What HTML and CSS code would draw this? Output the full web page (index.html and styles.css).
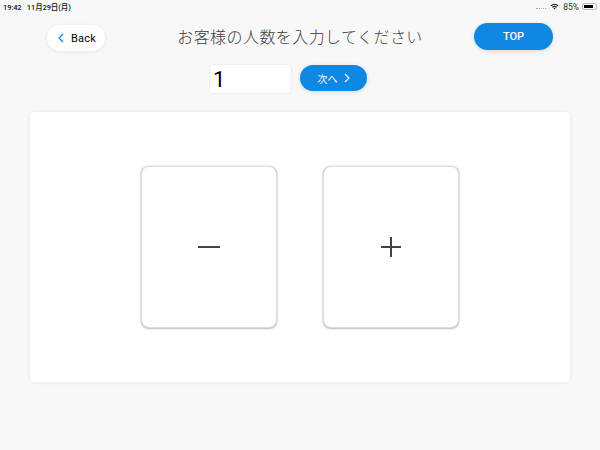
FILE: index.html
```html
<!DOCTYPE html>
<html lang="ja">
  <head>
    <meta charset="UTF-8" />
    <title>人数入力</title>
    <link rel="stylesheet" href="styles.css">
  </head>

  <body>
    <div class="status-bar">
      <span class="status-time">19:42&nbsp;&nbsp;&nbsp;11月29日(月)</span>
      <div class="status-right">
        <span class="status-dots"></span>
        <svg class="wifi" width="9" height="7" viewBox="0 0 12 9">
          <path d="M0.5 3 A8 8 0 0 1 11.5 3 L10.3 4.2 A6.3 6.3 0 0 0 1.7 4.2 Z" fill="#222" />
          <path d="M2.6 5 A5 5 0 0 1 9.4 5 L8.2 6.2 A3.3 3.3 0 0 0 3.8 6.2 Z" fill="#222" />
          <path d="M4.6 7 A2 2 0 0 1 7.4 7 L6 8.6 Z" fill="#222" />
        </svg>
        <span>85%</span>
        <div class="battery"><div class="battery-level"></div></div>
      </div>
    </div>

    <header class="header">
      <a class="back-btn">
        <svg width="6" height="10" viewBox="0 0 6 10">
          <path d="M5 1 L1 5 L5 9" fill="none" stroke="#0f88e3" stroke-width="1.2" />
        </svg>
        Back
      </a>
      <h1 class="title">お客様の人数を入力してください</h1>
      <a class="top-btn">TOP</a>
    </header>

    <div class="input-row">
      <input class="count-input" type="text" value="1" />
      <a class="next-btn">
        次へ
        <svg width="6" height="10" viewBox="0 0 6 10">
          <path d="M1 1 L5 5 L1 9" fill="none" stroke="#fff" stroke-width="1.1" />
        </svg>
      </a>
    </div>

    <main class="panel">
      <button class="count-btn">
        <svg width="24" height="24" viewBox="0 0 24 24">
          <path d="M1 12 H23" stroke="#444" stroke-width="2" />
        </svg>
      </button>
      <button class="count-btn">
        <svg width="24" height="24" viewBox="0 0 24 24">
          <path d="M2 12 H22 M12 2 V22" stroke="#444" stroke-width="2" />
        </svg>
      </button>
    </main>
  </body>
</html>
```

FILE: styles.css
```css
* {
  margin: 0;
  padding: 0;
  box-sizing: border-box;
}

html,
body {
  height: 100%;
  overflow: hidden;
}

body {
  background-color: #f8f8f8;
  font-family: Roboto, "Noto Sans CJK JP", sans-serif;
  color: #000;
}

.status-bar {
  display: flex;
  justify-content: space-between;
  align-items: center;
  height: 13px;
  padding: 0 3px 0 3px;
  font-size: 7.5px;
  color: #111;
}

.status-time {
  font-weight: 500;
  letter-spacing: -0.1px;
}

.status-right {
  display: flex;
  align-items: center;
  gap: 3px;
  font-size: 8.5px;
  color: #333;
}

.status-dots {
  width: 10px;
  border-bottom: 1px dotted #aaa;
  margin: 3px 1px 0 0;
}

.wifi {
  margin-right: 1px;
}

.battery {
  width: 15px;
  height: 7px;
  border: 1px solid #bbb;
  border-radius: 2px;
  padding: 1px;
}

.battery-level {
  width: 85%;
  height: 100%;
  background-color: #000;
}

.header {
  display: grid;
  grid-template-columns: 1fr auto 1fr;
  align-items: start;
  height: 28px;
  margin-top: 10px;
  padding: 0 47px;
}

.back-btn {
  justify-self: start;
  display: flex;
  align-items: center;
  gap: 7px;
  width: 58px;
  height: 26px;
  margin-top: 2px;
  padding-left: 11px;
  border-radius: 13px;
  background-color: #fff;
  box-shadow: 0 1px 4px rgba(0, 0, 0, 0.08);
  font-size: 11px;
  letter-spacing: 0.2px;
}

.title {
  height: 30px;
  font-size: 16px;
  line-height: 30px;
  font-weight: 300;
  letter-spacing: 0.43px;
  color: #3c3c3c;
}

.top-btn {
  justify-self: end;
  width: 79px;
  height: 27px;
  border-radius: 14px;
  background-color: #0f88e3;
  box-shadow: 0 1px 4px rgba(0, 0, 0, 0.15);
  color: #fff;
  font-size: 11px;
  font-weight: 500;
  line-height: 27px;
  text-align: center;
}

.input-row {
  display: flex;
  align-items: flex-start;
  gap: 8px;
  height: 48px;
  margin-top: 13px;
  padding-left: 209px;
}

.count-input {
  width: 83px;
  height: 30px;
  padding-left: 3px;
  border: 1px solid #eee;
  border-radius: 4px;
  background-color: #fff;
  font-family: Roboto, sans-serif;
  font-size: 22px;
  color: #000;
  outline: none;
}

.next-btn {
  display: flex;
  align-items: center;
  justify-content: center;
  gap: 6px;
  width: 67px;
  height: 26px;
  margin-top: 1px;
  border-radius: 13px;
  background-color: #0f88e3;
  box-shadow: 0 1px 4px rgba(0, 0, 0, 0.15);
  color: #fff;
  font-size: 10px;
}

.panel {
  display: flex;
  justify-content: center;
  align-items: center;
  gap: 46px;
  width: 540px;
  height: 270px;
  margin: 0 30px;
  border-radius: 4px;
  background-color: #fff;
  box-shadow: 0 0 4px rgba(0, 0, 0, 0.08);
}

.count-btn {
  display: flex;
  align-items: center;
  justify-content: center;
  width: 136px;
  height: 162px;
  border: 1px solid #dedede;
  border-radius: 8px;
  background-color: #fff;
  box-shadow: 0 0 2px rgba(0, 0, 0, 0.25), 0 1px 2px rgba(0, 0, 0, 0.2);
}
```
